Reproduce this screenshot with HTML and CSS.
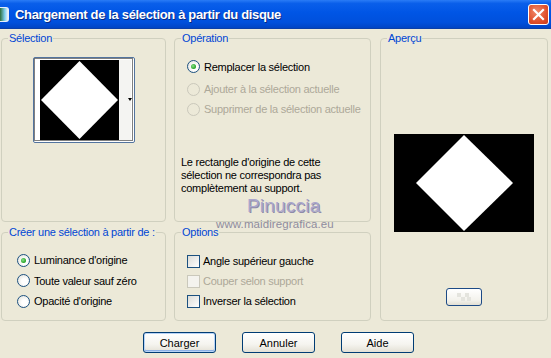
FILE: index.html
```html
<!DOCTYPE html>
<html lang="fr">
<head>
  <meta charset="UTF-8" />
  <title>Chargement de la sélection à partir du disque</title>
  <link rel="stylesheet" href="styles.css">
</head>
<body>
  <div class="window">
    <div class="titlebar">
      <span class="app-icon"></span>
      <span class="title">Chargement de la sélection à partir du disque</span>
      <span class="close">
        <svg width="13" height="13" viewBox="0 0 13 13">
          <path d="M2 2 L11 11 M11 2 L2 11" stroke="#fff" stroke-width="2.2" stroke-linecap="square"/>
        </svg>
      </span>
    </div>

    <div class="content">
      <div class="groups">
        <div class="group sel">
          <span class="legend">Sélection</span>
          <div class="thumb">
            <svg width="100" height="84" viewBox="0 0 100 84">
              <rect x="6" y="2" width="79" height="80" fill="#000"/>
              <polygon points="45.5,3 84,42 45.5,81 7,42" fill="#fff"/>
              <rect x="85" y="2" width="12" height="80" fill="#f4f4f2"/>
              <polygon points="94,40 98,40 96,43" fill="#000"/>
              <rect x="0.5" y="0.5" width="98" height="82" fill="none" stroke="#000" stroke-dasharray="1 1"/>
            </svg>
          </div>
        </div>

        <div class="group op">
          <span class="legend">Opération</span>
          <div class="radio-list op-list">
            <label class="row first"><span class="radio checked"></span>Remplacer la sélection</label>
            <label class="row disabled"><span class="radio"></span>Ajouter à la sélection actuelle</label>
            <label class="row disabled"><span class="radio"></span>Supprimer de la sélection actuelle</label>
          </div>
          <p class="note">Le rectangle d'origine de cette<br>sélection ne correspondra pas<br>complètement au support.</p>
        </div>

        <div class="group apercu">
          <span class="legend">Aperçu</span>
          <svg class="preview" width="140" height="98" viewBox="0 0 140 98">
            <rect width="140" height="98" fill="#000"/>
            <polygon points="70,1 119,49 70,97 22,49" fill="#fff"/>
          </svg>
          <button class="mini" type="button">
            <svg width="14" height="8" viewBox="0 0 14 8">
              <rect x="0" y="0" width="4" height="4" fill="#e4e4de"/>
              <rect x="8" y="0" width="4" height="4" fill="#e4e4de"/>
              <rect x="4" y="4" width="4" height="4" fill="#e4e4de"/>
              <rect x="10" y="4" width="4" height="4" fill="#e4e4de"/>
            </svg>
          </button>
        </div>

        <div class="group create">
          <span class="legend">Créer une sélection à partir de :</span>
          <div class="radio-list">
            <label class="row"><span class="radio checked"></span>Luminance d'origine</label>
            <label class="row"><span class="radio"></span>Toute valeur sauf zéro</label>
            <label class="row"><span class="radio"></span>Opacité d'origine</label>
          </div>
        </div>

        <div class="group options">
          <span class="legend">Options</span>
          <div class="radio-list">
            <label class="row"><span class="check"></span>Angle supérieur gauche</label>
            <label class="row disabled"><span class="check"></span>Couper selon support</label>
            <label class="row"><span class="check"></span>Inverser la sélection</label>
          </div>
        </div>
      </div>

      <div class="buttons">
        <button class="btn default" type="button">Charger</button>
        <button class="btn" type="button">Annuler</button>
        <button class="btn" type="button">Aide</button>
      </div>

      <div class="watermark">
        <span class="wm-name">Pinuccia</span>
        <span class="wm-url">www.maidiregrafica.eu</span>
      </div>
    </div>
  </div>
</body>
</html>
```

FILE: styles.css
```css
body {
  margin: 0;
  font-family: "Liberation Sans", Arial, sans-serif;
  font-size: 11px;
  letter-spacing: -0.25px;
  color: #000;
  background-color: #ece9d8;
}

.window {
  width: 551px;
  height: 358px;
  overflow: hidden;
  background-color: #ece9d8;
}

.titlebar {
  height: 29px;
  display: flex;
  align-items: center;
  background: linear-gradient(#2a7cf6 0%, #0a5fea 12%, #0055e5 45%, #0050dc 80%, #0044c4 100%);
  border-bottom: 1px solid #0a3fa8;
  box-sizing: border-box;
}

.app-icon {
  width: 8px;
  height: 13px;
  margin-right: 6px;
  background: linear-gradient(90deg, #2c6e3c, #7fd0f0 60%, #f0f4f8);
  border-radius: 0 3px 3px 0;
  border: 1px solid #e8eef8;
  border-left: none;
}

.title {
  color: #fff;
  font-weight: bold;
  font-size: 13px;
  letter-spacing: -0.35px;
  text-shadow: 1px 1px 0 #0a2a80;
  flex: 1;
}

.close {
  width: 19px;
  height: 19px;
  margin-right: 2px;
  display: flex;
  align-items: center;
  justify-content: center;
  border: 1px solid #fff;
  border-radius: 3px;
  background: radial-gradient(circle at 40% 35%, #f08a6c, #e0502c 60%, #c83a1a);
}

.content {
  position: relative;
  padding: 9px 0 0 1px;
}

.groups {
  display: grid;
  grid-template-columns: 165px 197px 168px;
  grid-template-rows: 184px 89px;
  column-gap: 8px;
  row-gap: 10px;
}

.group {
  position: relative;
  border: 1px solid #d0d0bf;
  border-radius: 4px;
  box-sizing: border-box;
}

.legend {
  position: absolute;
  top: -7px;
  left: 6px;
  padding: 0 1px;
  background-color: #ece9d8;
  color: #0046d5;
  line-height: 13px;
  white-space: nowrap;
}

.sel {
  padding: 18px 0 0 31px;
}

.thumb {
  width: 100px;
  height: 84px;
  border: 1px solid #52739e;
  border-radius: 2px;
  background-color: #fff;
}

.thumb svg {
  display: block;
}

.apercu {
  grid-row: 1 / 3;
  grid-column: 3;
  margin-left: 1px;
  width: 168px;
  display: flex;
  flex-direction: column;
  align-items: center;
  padding-top: 95px;
}

.preview {
  display: block;
}

.mini {
  margin-top: 56px;
  width: 36px;
  height: 18px;
  padding: 0;
  border: 1px solid #1c4a86;
  border-radius: 3px;
  background: linear-gradient(#ffffff, #f3f2ec 70%, #e2dfd4);
  display: flex;
  align-items: center;
  justify-content: center;
}

.radio-list {
  display: flex;
  flex-direction: column;
}

.row {
  display: flex;
  align-items: center;
  height: 20px;
  white-space: nowrap;
}

.row.disabled {
  color: #aca899;
}

.op-list {
  padding: 15px 0 0 12px;
}

.op-list .row.first {
  height: 25px;
}

.op-list .row {
  height: 20px;
}

.create .radio-list {
  padding: 17px 0 0 15px;
}

.create .row {
  height: 20.5px;
}

.options .radio-list {
  padding: 18px 0 0 12px;
}

.radio {
  width: 13px;
  height: 13px;
  box-sizing: border-box;
  border: 1px solid #1c5180;
  border-radius: 50%;
  background: radial-gradient(circle at 60% 60%, #ffffff 30%, #dcdcd4 100%);
  margin-right: 4px;
  display: flex;
  align-items: center;
  justify-content: center;
}

.radio.checked::after {
  content: "";
  width: 5px;
  height: 5px;
  border-radius: 50%;
  background: radial-gradient(circle at 40% 40%, #8be08b, #21a121 70%);
}

.disabled .radio {
  border-color: #cac8bb;
  background: none;
}

.check {
  width: 13px;
  height: 13px;
  box-sizing: border-box;
  border: 1px solid #1c5180;
  background: linear-gradient(135deg, #dcdcd7, #ffffff);
  margin-right: 3px;
}

.disabled .check {
  border-color: #cac8bb;
  background: #f4f3ee;
}

.note {
  margin: 37px 0 0 6px;
  line-height: 13px;
}

.buttons {
  display: flex;
  gap: 26px;
  padding: 11px 0 0 142px;
}

.btn {
  width: 73px;
  height: 21px;
  padding: 0;
  font-family: "Liberation Sans", Arial, sans-serif;
  font-size: 11px;
  color: #000;
  border: 1px solid #003c74;
  border-radius: 3px;
  background: linear-gradient(#ffffff, #f5f4ef 60%, #e3e0d5);
}

.btn.default {
  box-shadow: inset 0 0 0 1px #b7d3f6, inset 0 -1px 0 1px #8cb0e6;
}

.watermark {
  position: absolute;
  left: 216px;
  top: 166px;
  width: 122px;
  display: flex;
  flex-direction: column;
  align-items: flex-start;
  pointer-events: none;
}

.wm-name {
  margin-left: 31px;
  font-family: "Liberation Sans", Arial, sans-serif;
  font-size: 19px;
  letter-spacing: 0.2px;
  color: #aaa6cc;
  text-shadow: 1px 1px 0 #8e8aa8;
  line-height: 22px;
}

.wm-url {
  font-family: "Liberation Sans", Arial, sans-serif;
  font-size: 11.5px;
  color: #8f8c9e;
  letter-spacing: 0.1px;
  line-height: 13px;
  margin-top: 1px;
}
```
